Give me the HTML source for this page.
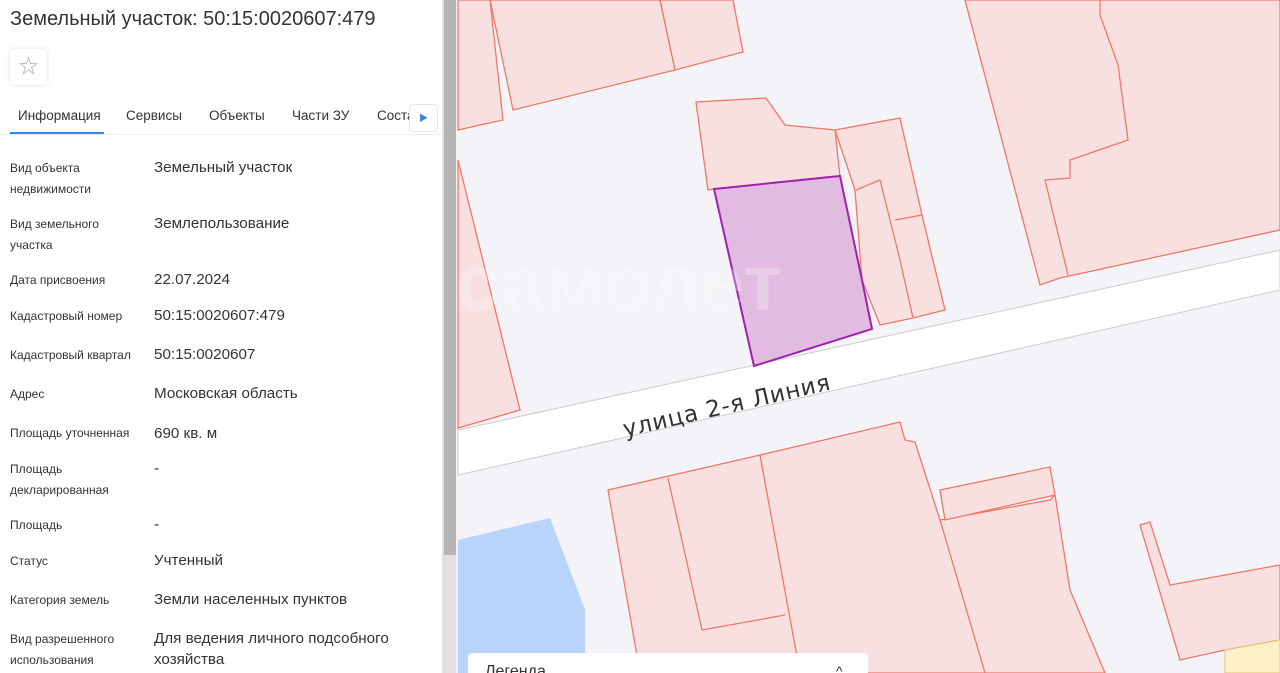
<!DOCTYPE html>
<html><head><meta charset="utf-8"><style>
*{margin:0;padding:0;box-sizing:border-box}
body{width:1280px;height:673px;overflow:hidden;position:relative;background:#f3f3f8;font-family:"Liberation Sans","Noto Sans CJK SC",sans-serif}
#panel{position:absolute;left:0;top:0;width:442px;height:673px;background:#fff;color:#333}
h1{position:absolute;left:10px;top:8px;font-size:20px;font-weight:normal;color:#333}
.star{position:absolute;left:10px;top:49px;width:37px;height:36px;border-radius:4px;box-shadow:0 0 4px rgba(0,0,0,.15);color:#aaa;font-size:20px;text-align:center;line-height:36px}
.tabs{position:absolute;left:0;top:105px;width:442px;height:30px;border-bottom:1px solid #eee;font-size:13.5px;color:#333}
.tabs span{position:absolute;top:3px}
.ul{position:absolute;left:10px;top:27px;width:94px;height:2px;background:#3b82e6}
.arr{position:absolute;left:409px;top:104px;width:29px;height:28px;background:#fff;border:1px solid #e3e6ec;border-radius:4px;color:#3b82e6;font-size:9px;text-align:center;line-height:26px}
.l{position:absolute;left:10px;font-size:12px;line-height:21px;color:#333}
.v{position:absolute;left:154px;font-size:15.2px;line-height:21px;color:#333}
#sb{position:absolute;left:442px;top:0;width:14px;height:673px;background:#e0e0e0}
#sb div{position:absolute;left:2px;top:0;width:12px;height:555px;background:#b5b5b5}
svg{position:absolute;left:0;top:0}
</style></head><body>
<svg width="1280" height="673">
<g fill="#f8e0e0" stroke="#f07868" stroke-width="1.3">
<polygon points="458,0 490,0 503,120 480,125 458,130"/>
<polygon points="490,0 660,0 675,70 513,110"/>
<polygon points="660,0 733,0 743,52 675,70"/>
<polygon points="458,160 520,410 458,428"/>
<polygon points="696,102 766,98 785,125 835,130 840,177 714,189 708,190"/>
<polygon points="835,130 900,118 922,215 945,310 913,318 880,325 862,280 855,190"/>
<line x1="856" y1="190" x2="880" y2="180"/><line x1="880" y1="180" x2="900" y2="260"/><line x1="900" y1="260" x2="913" y2="318"/><line x1="895" y1="220" x2="922" y2="215"/>
<polygon points="965,0 1280,0 1280,230 1060,278 1040,285"/>
<polyline fill="none" points="1100,0 1100,15 1118,65 1128,140 1070,160 1070,178 1045,180 1068,275"/>
<polygon points="608,490 760,455 900,422 905,440 915,442 940,520 1050,500 1055,495 1070,590 1105,673 640,673"/>
<line x1="668" y1="478" x2="702" y2="630"/><line x1="702" y1="630" x2="785" y2="615"/><line x1="760" y1="455" x2="800" y2="673"/><line x1="940" y1="520" x2="985" y2="673"/>
<polygon points="940,490 1050,467 1055,495 945,520"/>
<polygon points="1140,525 1150,522 1170,585 1280,565 1280,640 1225,650 1180,660"/>
</g>
<polygon points="1225,650 1280,640 1280,673 1225,673" fill="#fbf0c8" stroke="#e8c070"/>
<polygon points="458,430 1280,250 1280,290 458,475" fill="#fff" stroke="#ccc"/>
<polygon points="458,540 550,518 585,610 585,673 458,673" fill="#b8d4fb"/>
<polygon points="714,189 840,176 862,280 872,329 754,366" fill="#e2bbe0" stroke="#a020b0" stroke-width="2"/>
<text x="0" y="0" transform="translate(625,437) rotate(-13)" font-size="23" fill="#333" font-family="DejaVu Sans,sans-serif" letter-spacing="0.8">улица  2-я  Линия</text>
<text x="455" y="310" font-size="80" font-weight="bold" fill="#fff" opacity=".25" font-family="Liberation Sans,sans-serif">самолет</text>
<rect x="468" y="653" width="400" height="25" rx="4" fill="#fff"/>
<text x="485" y="676" font-size="16" fill="#333" font-family="Liberation Sans,sans-serif">Легенда</text>
<text x="836" y="676" font-size="14" fill="#333">^</text>
</svg>
<div id="panel">
<h1>Земельный участок: 50:15:0020607:479</h1>
<div class="star">☆</div>
<div class="tabs"><span style="left:18px">Информация</span><span style="left:126px">Сервисы</span><span style="left:209px">Объекты</span><span style="left:292px">Части ЗУ</span><span style="left:377px">Соста</span><div class="ul"></div></div>
<div class="arr">▶</div>
<div class="l" style="top:158px">Вид объекта<br>недвижимости</div><div class="v" style="top:157px">Земельный участок</div>
<div class="l" style="top:214px">Вид земельного<br>участка</div><div class="v" style="top:213px">Землепользование</div>
<div class="l" style="top:270px">Дата присвоения</div><div class="v" style="top:269px">22.07.2024</div>
<div class="l" style="top:306px">Кадастровый номер</div><div class="v" style="top:305px">50:15:0020607:479</div>
<div class="l" style="top:345px">Кадастровый квартал</div><div class="v" style="top:344px">50:15:0020607</div>
<div class="l" style="top:384px">Адрес</div><div class="v" style="top:383px">Московская область</div>
<div class="l" style="top:423px">Площадь уточненная</div><div class="v" style="top:423px">690 кв. м</div>
<div class="l" style="top:459px">Площадь<br>декларированная</div><div class="v" style="top:458px">-</div>
<div class="l" style="top:515px">Площадь</div><div class="v" style="top:514px">-</div>
<div class="l" style="top:551px">Статус</div><div class="v" style="top:550px">Учтенный</div>
<div class="l" style="top:590px">Категория земель</div><div class="v" style="top:589px">Земли населенных пунктов</div>
<div class="l" style="top:629px">Вид разрешенного<br>использования</div><div class="v" style="top:628px">Для ведения личного подсобного<br>хозяйства</div>
</div>
<div id="sb"><div></div></div>
</body></html>
